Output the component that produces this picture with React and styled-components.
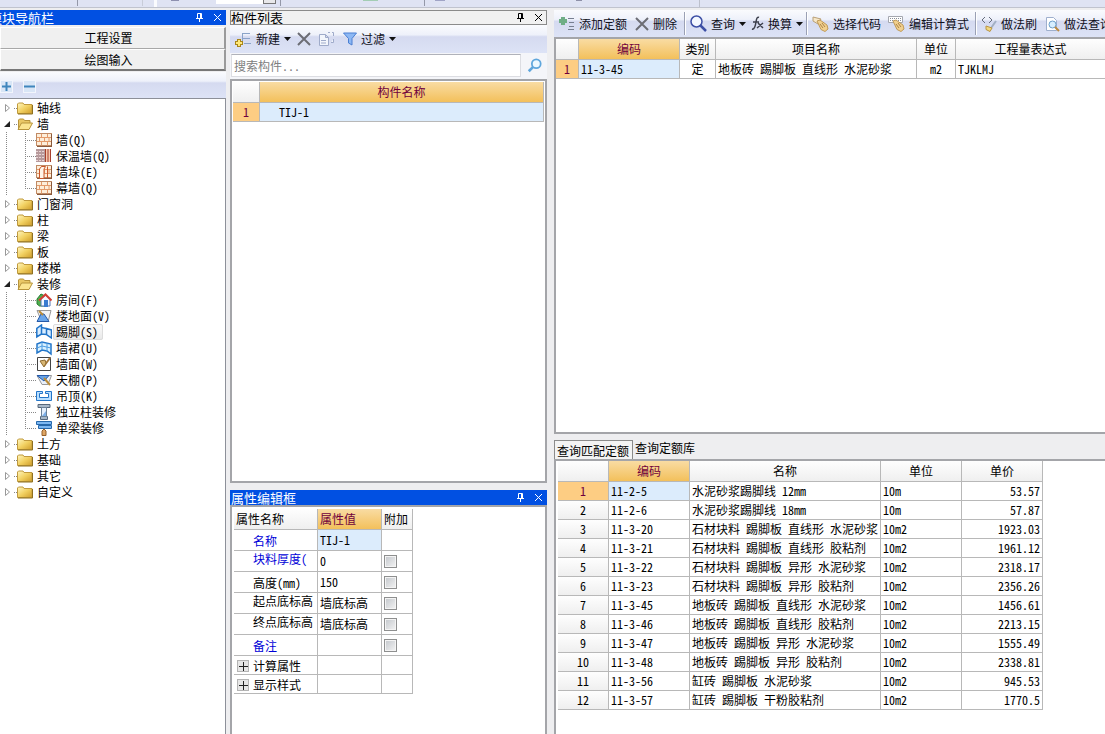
import React from "react";
import styled, { createGlobalStyle, css } from "styled-components";

const sans = '"Noto Sans CJK SC", "Noto Sans", sans-serif';

const Global = createGlobalStyle`
  *, *::before, *::after { box-sizing: border-box; }
  body { margin: 0; font: 12px/16px ${sans}; font-feature-settings: "hwid"; color: #000; background: #eeeef0; overflow: hidden; }
  button, input { font: inherit; font-feature-settings: inherit; color: inherit; }
  button { cursor: pointer; }
  svg { display: block; flex: none; }
`;

const line = "#b8b8b8";
const orange = "linear-gradient(#f9dca3, #f3c05b)";
const grey = "linear-gradient(#fefefe, #efefef)";
const lilac = "linear-gradient(#fafbfe 0%, #eef1fa 35%, #d5daf0 42%, #dde3f6 100%)";

const Window = styled.div`
  display: flex;
  flex-direction: column;
  height: 100vh;
  min-height: 720px;
`;
const TopStrip = styled.div`
  display: flex;
  flex: none;
  height: 8px;
  background: #dfe3f3;
  border-bottom: 1px solid #c0c3ce;
  overflow: hidden;
`;
const StripPart = styled.span`
  flex: none;
  width: ${(p) => p.$w}px;
  height: ${(p) => p.$h || 6}px;
  margin-left: ${(p) => p.$gap}px;
  background: ${(p) => p.$c};
  border: ${(p) => (p.$boxed ? "1px solid #777" : "0")};
  border-top: 0;
`;
const Workspace = styled.main`
  flex: 1;
  min-height: 0;
  display: flex;
  gap: 4px;
  padding-top: 2px;
`;
const Column = styled.section`
  display: flex;
  flex-direction: column;
  min-width: 0;
`;
const Nav = styled(Column)`
  flex: none;
  width: 226px;
`;
const Middle = styled(Column)`
  flex: none;
  width: 317px;
  gap: 7px;
`;
const Right = styled(Column)`
  flex: 1;
  margin-left: 3px;
  gap: 6px;
`;
const Pane = styled.div`
  display: flex;
  flex-direction: column;
  min-height: 0;
  flex: ${(p) => (p.$size ? `0 0 ${p.$size}px` : "1")};
`;

const TitleBar = styled.header`
  display: flex;
  align-items: center;
  flex: none;
  height: 15px;
  font-size: 13px;
  line-height: 15px;
  color: #fff;
  background: #0150e2;
  ${(p) => p.$plain && css`
    color: #000;
    background: #f1f1f1;
    outline: 1px solid #8b8b8b;
    outline-offset: -1px;
  `}
`;
const Title = styled.h2`
  flex: 1;
  margin: 0 0 0 ${(p) => (p.$cut ? "-11px" : "1px")};
  font: inherit;
  white-space: nowrap;
`;
const GlyphButton = styled.button`
  display: flex;
  align-items: center;
  justify-content: center;
  width: 18px;
  height: 15px;
  padding: 0;
  border: 0;
  background: none;
`;
const Panel = styled.div`
  flex: 1;
  min-height: 0;
  background: #fff;
  border: 2px solid #a4a5a9;
  border-bottom-width: ${(p) => (p.$open ? 0 : 2)}px;
  border-right-width: ${(p) => (p.$flush ? 0 : 2)}px;
  padding: ${(p) => p.$pad || "0"};
  overflow: hidden;
`;

const ModuleButton = styled.button`
  flex: none;
  height: 22px;
  padding: 0 8px 0 0;
  background: #f0f0f0;
  border: 1px solid #fff;
  border-right: 2px solid #9a9a9a;
  border-bottom: ${(p) => (p.$strong ? "2px solid #777" : "1px solid #a8a8a8")};
`;
const ModuleList = styled.div`
  display: flex;
  flex-direction: column;
  padding: 2px 0 1px;
`;
const NavTools = styled.div`
  display: flex;
  align-items: center;
  gap: 10px;
  flex: none;
  height: 26px;
  padding-top: 2px;
  background: ${lilac};
`;
const SquareButton = styled.button`
  display: flex;
  align-items: center;
  justify-content: center;
  width: 13px;
  height: 13px;
  padding: 0;
  border: 1px solid #f2f5fc;
  background: #d9e6f6;
`;

const Tree = styled.ul`
  flex: 1;
  margin: 0;
  padding: 1px 0 0;
  list-style: none;
  background: #fff;
  border-top: 1px solid #8d9099;
  border-right: 1px solid #8d9099;
  overflow: hidden;
`;
const Group = styled.ul`
  margin: 0;
  padding: 0 0 0 6px;
  list-style: none;
  background: repeating-linear-gradient(#888 0 1px, transparent 1px 2px) 6px 0 / 1px 100% no-repeat;
`;
const TreeRow = styled.div`
  display: flex;
  align-items: center;
  height: 16px;
  padding-left: 3px;
  white-space: nowrap;
`;
const Stub = styled.span`
  width: 3px;
  height: 1px;
  margin-left: 3px;
  background: repeating-linear-gradient(90deg, #888 0 1px, transparent 1px 2px);
`;
const Branch = styled.span`
  width: 11px;
  height: 16px;
  margin-left: 16px;
  background:
    repeating-linear-gradient(#888 0 1px, transparent 1px 2px) 0 0 / 1px ${(p) => (p.$last ? "50%" : "100%")} no-repeat,
    repeating-linear-gradient(90deg, #888 0 1px, transparent 1px 2px) 0 8px / 100% 1px no-repeat;
`;
const Label = styled.span`
  padding: 0 5px 0 3px;
  margin-left: 1px;
  line-height: 16px;
  ${(p) => p.$selected && css`
    background: linear-gradient(#fbfbfb, #e8e8e8);
    outline: 1px solid #dcdcdc;
    outline-offset: -1px;
    border-radius: 2px;
  `}
`;

const ToolBar = styled.div`
  display: flex;
  align-items: center;
  flex: none;
  height: ${(p) => p.$height}px;
  padding-left: 5px;
  background: ${lilac};
  overflow: hidden;
`;
const Tool = styled.button`
  display: flex;
  align-items: center;
  gap: 4px;
  flex: none;
  padding: 0;
  margin-right: ${(p) => p.$after || 0}px;
  border: 0;
  background: none;
  color: #10101c;
  white-space: nowrap;
`;
const Separator = styled.span`
  flex: none;
  width: 2px;
  height: 23px;
  margin-right: 4px;
  border-left: 1px solid #9aa0b4;
  border-right: 1px solid #fff;
`;
const Search = styled.label`
  display: flex;
  align-items: center;
  flex: none;
  height: 26px;
  padding: 1px 5px 2px 1px;
  background: #f4f5f9;
`;
const SearchBox = styled.input`
  flex: 1;
  min-width: 0;
  height: 23px;
  margin-right: 6px;
  padding: 0 2px;
  border: 1px solid #dcdde2;
  border-top-color: #b0b2ba;
  background: #fff;
  &::placeholder { color: #808080; opacity: 1; }
`;

const Grid = styled.table`
  width: ${(p) => (p.$fill ? "100%" : `${p.$width}px`)};
  table-layout: fixed;
  border-collapse: separate;
  border-spacing: 0;
  ${(p) => p.$openEnd && css`
    tr > :last-child { border-right: 0; }
  `}
`;
const Th = styled.th`
  width: ${(p) => (p.$w ? `${p.$w}px` : "auto")};
  height: ${(p) => p.$h || 21}px;
  padding: 0 2px;
  font-weight: normal;
  text-align: ${(p) => p.$align || "center"};
  line-height: 16px;
  white-space: nowrap;
  color: ${(p) => (p.$active ? "#70003c" : "#000")};
  background: ${(p) => (p.$active ? orange : grey)};
  border-right: 1px solid ${line};
  border-bottom: 1px solid ${line};
`;
const Td = styled.td`
  height: ${(p) => p.$h || 19}px;
  padding: ${(p) => p.$pad || "0 2px"};
  line-height: 16px;
  text-align: ${(p) => p.$align || "left"};
  white-space: nowrap;
  overflow: hidden;
  background: ${(p) => (p.$selected ? "#dcecfc" : "#fff")};
  border-right: 1px solid ${line};
  border-bottom: 1px solid ${line};
`;
const RowHead = styled(Th)`
  height: 19px;
  text-align: center;
  ${(p) => p.$current && css`
    color: #70003c;
    background: #fdcd83;
  `}
`;
const PropName = styled(Td)`
  padding-left: ${(p) => (p.$group ? 3 : 19)}px;
  padding-right: 0;
  padding-top: ${(p) => (p.$raised ? 0 : 2)}px;
  color: ${(p) => (p.$blue ? "#0000d8" : "#000")};
  vertical-align: ${(p) => (p.$raised ? "top" : "middle")};
`;
const GroupName = styled.span`
  display: flex;
  align-items: center;
  gap: 4px;
`;
const ExpandBox = styled.button`
  display: flex;
  align-items: center;
  justify-content: center;
  width: 12px;
  height: 12px;
  padding: 0;
  border: 1px solid #b4b4b4;
  background: #e6e6e6;
`;
const Tick = styled.input.attrs({ type: "checkbox" })`
  appearance: none;
  display: block;
  width: 13px;
  height: 13px;
  margin: 0;
  border: 1px solid #8e8f8f;
  background: linear-gradient(135deg, #c2c6cb, #f4f4f4);
  box-shadow: inset 0 0 0 1px #f4f4f4;
`;

const Tabs = styled.div`
  display: flex;
  flex: none;
  height: 19px;
`;
const Tab = styled.button`
  height: ${(p) => (p.$on ? 19 : 17)}px;
  padding: ${(p) => (p.$on ? "1px 3px 0 2px" : "0 3px 2px 2px")};
  line-height: 16px;
  border: ${(p) => (p.$on ? "1px solid #8b8b8b" : "0")};
  border-bottom: 0;
  background: ${(p) => (p.$on ? "#f3f3f3" : "none")};
`;

const Pin = () => (
  <svg width="9" height="9" viewBox="0 0 9 9" fill="none" stroke="currentColor">
    <path d="M2.500 5V.5h4V5M5.500 1v4M1 5.500h7M4.500 6v3" />
  </svg>
);
const Close = () => (
  <svg width="9" height="9" viewBox="0 0 9 9" fill="none" stroke="currentColor">
    <path d="M1 1l7 7M8 1L1 8" />
  </svg>
);
const Caret = () => (
  <svg width="7" height="4" viewBox="0 0 7 4"><path d="M0 0h7L3.500 4z" fill="#111" /></svg>
);
const Plus = ({ color = "#3f86bd", size = 9, weight = 2 }) => (
  <svg width={size} height={size} viewBox="0 0 9 9"><path d="M4.500 0v9M0 4.500h9" stroke={color} strokeWidth={weight} /></svg>
);
const Minus = () => (
  <svg width="11" height="9" viewBox="0 0 11 9"><path d="M0 4.500h11" stroke="#3f86bd" strokeWidth="2" /></svg>
);
const Expander = ({ open }) => (
  <svg width="8" height="10" viewBox="0 0 8 10">
    {open
      ? <path d="M7 2v6H1z" fill="#222" />
      : <path d="M2.500 1.500v7L6.500 5z" fill="#fff" stroke="#999" />}
  </svg>
);
const Folder = ({ open }) => (
  <svg width="16" height="14" viewBox="0 0 16 14">
    <defs>
      <linearGradient id="folderFill" x1="0" y1="0" x2="1" y2="1">
        <stop offset="0" stopColor="#fff6c0" /><stop offset=".5" stopColor="#f2d162" /><stop offset="1" stopColor="#cf9d2a" />
      </linearGradient>
    </defs>
    {open ? (
      <>
        <path d="M1.500 12V3l1-1h4l1 1.500h5.500V7" fill="#e9c765" stroke="#b8943c" />
        <path d="M1 12.500L4.500 6h11l-3.500 6.500z" fill="#fbe48f" stroke="#b8943c" />
      </>
    ) : (
      <>
        <path d="M.5 12.500V3l1-1h4.500l1 1.500h8v9z" fill="url(#folderFill)" stroke="#c09a3e" />
        <path d="M15.500 4v9H1" fill="none" stroke="#8f701f" />
      </>
    )}
  </svg>
);

const BrickIcon = () => (
  <>
    <rect x=".5" y="1.500" width="15" height="12" fill="#fdeeda" stroke="#c08a64" />
    <path d="M1 5.500h14M1 9.500h14M5.500 2v3.500M11.500 2v3.500M3.500 6v3.500M8.500 6v3.500M13 6v3.500M5.500 10v3.500M11.500 10v3.500" stroke="#e39a6a" />
    <path d="M1 14.500h15M15.500 2v12" stroke="#8a5a3c" />
  </>
);
const treeIcons = {
  brick: <BrickIcon />,
  insulated: (
    <>
      <rect x="0" y="1" width="9" height="13" fill="#b79a9c" />
      <path d="M0 3.500h9M0 6.500h9M0 9.500h9M0 12.500h9" stroke="#ead6d6" strokeDasharray="2 1" />
      <rect x="9" y="1" width="6" height="13" fill="#f7c9b0" />
      <path d="M9.500 1v13M12 1v13M14.500 1v13" stroke="#a8402c" />
    </>
  ),
  pier: (
    <>
      <BrickIcon />
      <path d="M3.500 14.500V5l2-2.500h4L8 5v9.500zM11.500 3v11" fill="#fff6ea" stroke="#c8582c" />
    </>
  ),
  room: (
    <>
      <path d="M1 7l4-5 4 2v10H3.500L1 12z" fill="#4fae4e" stroke="#287a30" />
      <path d="M5 7v7h9V7L9.500 3z" fill="#f4f8ff" stroke="#5578b8" />
      <path d="M3 8.500l6.500-6 6 6" fill="none" stroke="#d33f35" strokeWidth="2" />
      <path d="M8 8h4v7H8z" fill="#397bd0" />
    </>
  ),
  floor: (
    <>
      <path d="M1 2.500h14L12.500 12H5z" fill="#f1f3f6" stroke="#999" />
      <path d="M1 13.500L5 6h3l5 7.500z" fill="#68a5eb" stroke="#265aa8" />
      <path d="M3 3l4 4" stroke="#b98b39" strokeWidth="2" />
    </>
  ),
  skirting: (
    <>
      <path d="M.8 13V4.500L5.500 1v9zM5.500 3.500l5 1v6l-5-.5zM10.500 4.500l5 1.500v8l-5-3.500z" fill="#d8edff" stroke="#2275c9" strokeWidth="1.500" />
    </>
  ),
  dado: (
    <>
      <path d="M1 13V4l5-2 9 2v10l-4-3-5-1z" fill="#d8f1ff" stroke="#2275c9" strokeWidth="1.500" />
      <path d="M1 8l5-2 9 2M6 2v8M11 3v8" fill="none" stroke="#4d9ce2" />
    </>
  ),
  wallface: (
    <>
      <path d="M1.500 1.500h13v13h-13z" fill="#fff" stroke="#444" />
      <path d="M8 10l6-8" stroke="#a87939" strokeWidth="2" />
      <path d="M4 5l5-1 1 3-2 4z" fill="#d8b673" stroke="#8e6c32" />
    </>
  ),
  ceiling: (
    <>
      <path d="M1 3.500h14.500L12 12.500H6z" fill="#e7effb" stroke="#999" />
      <path d="M1 3.500h12l-5 5.500z" fill="#65a2e6" stroke="#265aa8" />
      <path d="M8 6l6 7" stroke="#b98b39" strokeWidth="2" />
    </>
  ),
  suspended: <path d="M6.500 3.500h-6v9h15v-9h-6v2h3v4h-9v-4h3z" fill="#b9dfff" stroke="#2275c9" />,
  column: (
    <>
      <path d="M2 .5h12v3H2zM4.500 12.500h7v3h-7z" fill="#a8b8c8" stroke="#57687c" />
      <path d="M5.500 3.500h5v9h-5z" fill="#e4effc" stroke="#6c8196" />
      <path d="M6 12l4-5v5z" fill="#7eb0e8" />
    </>
  ),
  beam: (
    <>
      <path d="M.5 1.500h15v3H.5zM2.500 5.500h13v3h-13z" fill="#7cb7f2" stroke="#2668ac" />
      <path d="M6 11l2-2 2 2v4.500H6z" fill="#dfa664" stroke="#93602c" />
    </>
  ),
};
const TreeIcon = ({ name }) => <svg width="16" height="16" viewBox="0 0 16 16">{treeIcons[name]}</svg>;

const NewIcon = () => (
  <svg width="17" height="17" viewBox="0 0 17 17">
    <path d="M7 2.500h8M7 7.500h8M9 12.500h7M7.500 2v9" stroke="#8aa3c8" fill="none" />
    <path d="M4 8v8M0 12h8" stroke="#a8861e" strokeWidth="4" /><path d="M4 9v6M1 12h6" stroke="#ffe878" strokeWidth="2" />
  </svg>
);
const AddIcon = () => (
  <svg width="16" height="16" viewBox="0 0 16 16">
    <path d="M4 1v8M0 5h8" stroke="#6fae86" strokeWidth="4" />
    <path d="M9 2.500h6M10 6.500h5M10 10.500h5M9 13.500h6" stroke="#777f90" fill="none" />
  </svg>
);
const DeleteIcon = () => (
  <svg width="14" height="14" viewBox="0 0 14 14"><path d="M1 1l12 12M13 1L1 13" stroke="#6c6d75" strokeWidth="2" /></svg>
);
const CopyIcon = () => (
  <svg width="17" height="16" viewBox="0 0 17 16" fill="#f3f6fc" stroke="#9fabca">
    <path d="M1.500 3.500h6l3 3v8h-9zM7.500 3.500v3h3M3 9.500h5M3 12h5" /><path d="M10 1.500h2M14 1.500h1.500V5M15.500 8v3.500H13" />
  </svg>
);
const FilterIcon = () => (
  <svg width="14" height="14" viewBox="0 0 14 14"><path d="M.5 1h13L9 6.500V13l-3.500-2V6.500z" fill="#8db8f4" stroke="#4a7fd2" /></svg>
);
const Magnifier = ({ color = "#3d4fa5", flip, size = 17 }) => (
  <svg width={size} height={size} viewBox="0 0 17 17" fill="none" stroke={color}>
    {flip
      ? <><circle cx="10.500" cy="6.500" r="5" strokeWidth="2" fill="#edf8ff" /><path d="M7 10l-5 5" strokeWidth="3" /></>
      : <><circle cx="6.500" cy="6.500" r="5.500" strokeWidth="1.500" fill="#f4f8ff" /><path d="M10 10l6 6" strokeWidth="2.500" /></>}
  </svg>
);
const FxIcon = () => (
  <svg width="13" height="15" viewBox="0 0 13 15" fill="none" stroke="#3c3f4c" strokeWidth="1.500">
    <path d="M8 1.500C6 .5 5.500 3 5 6S3.500 14 1 13M2 6h6M7 7l5 5M12 7l-6 5" />
  </svg>
);
const Hand = ({ children }) => (
  <svg width="17" height="17" viewBox="0 0 17 17">
    {children}
    <path d="M5 6l3-1 7 5 1 4-3 2.500-4-2z" fill="#f1d08e" stroke="#c09a58" />
    <path d="M8 9l3 4M10 8l3 4" stroke="#ac8348" />
  </svg>
);
const CodeIcon = () => <Hand><path d="M1 2l8 2-3 5-5-3z" fill="#f6e7c8" stroke="#b9a078" /></Hand>;
const FormulaIcon = () => (
  <Hand>
    <path d="M.5 1.500h14v6H.5z" fill="#fff" stroke="#a4a7af" />
    <path d="M2 3.500h11M2 5.500h11" stroke="#888d99" strokeDasharray="1 1" />
  </Hand>
);
const BrushIcon = () => (
  <svg width="16" height="16" viewBox="0 0 16 16" fill="none">
    <path d="M4 1L1 4l3 3M8 1l3 3-3 3" stroke="#666c7c" />
    <path d="M15 5l-5 7" stroke="#a2afc3" strokeWidth="2" /><path d="M5 10l6 2-2 3.500-4-2z" fill="#f2d87e" stroke="#b99342" />
  </svg>
);
const PageSearchIcon = () => (
  <svg width="15" height="16" viewBox="0 0 15 16">
    <path d="M1.500 1.500h7l3 3v10h-10z" fill="#fff" stroke="#9eafcd" />
    <circle cx="7.500" cy="8.500" r="3.500" fill="#d7efff" stroke="#6d9fcb" /><path d="M10 11l4 4" stroke="#bc8a42" strokeWidth="2" />
  </svg>
);

const stripParts = [
  { gap: 77, w: 1, c: "#9498a8" },
  { gap: 64, w: 1, c: "#c8ccd8" },
  { gap: 11, w: 3, c: "#fafbfe", h: 7 },
  { gap: 14, w: 8, c: "#8e90b0", h: 1 },
  { gap: 37, w: 47, c: "#fff", h: 4 },
  { gap: 0, w: 13, c: "#e8e8ea", h: 4, boxed: true },
  { gap: 4, w: 1, c: "#9498a8" },
  { gap: 82, w: 15, c: "#a3cdb4", h: 1 },
  { gap: 46, w: 1, c: "#9498a8" },
  { gap: 10, w: 10, c: "#a0a4c6", h: 1 },
  { gap: 131, w: 6, c: "#8e90a8", h: 1 },
  { gap: 117, w: 1, c: "#bcc0cc", h: 7 },
];

const tree = [
  { t: "轴线" },
  { t: "墙", kids: [["brick", "墙(Q)"], ["insulated", "保温墙(Q)"], ["pier", "墙垛(E)"], ["brick", "幕墙(Q)"]] },
  { t: "门窗洞" }, { t: "柱" }, { t: "梁" }, { t: "板" }, { t: "楼梯" },
  { t: "装修", kids: [["room", "房间(F)"], ["floor", "楼地面(V)"], ["skirting", "踢脚(S)"], ["dado", "墙裙(U)"], ["wallface", "墙面(W)"], ["ceiling", "天棚(P)"], ["suspended", "吊顶(K)"], ["column", "独立柱装修"], ["beam", "单梁装修"]] },
  { t: "土方" }, { t: "基础" }, { t: "其它" }, { t: "自定义" },
];

const quotas = [
  ["11-2-5", "水泥砂浆踢脚线 12mm", "10m", "53.57"],
  ["11-2-6", "水泥砂浆踢脚线 18mm", "10m", "57.87"],
  ["11-3-20", "石材块料 踢脚板 直线形 水泥砂浆", "10m2", "1923.03"],
  ["11-3-21", "石材块料 踢脚板 直线形 胶粘剂", "10m2", "1961.12"],
  ["11-3-22", "石材块料 踢脚板 异形 水泥砂浆", "10m2", "2318.17"],
  ["11-3-23", "石材块料 踢脚板 异形 胶粘剂", "10m2", "2356.26"],
  ["11-3-45", "地板砖 踢脚板 直线形 水泥砂浆", "10m2", "1456.61"],
  ["11-3-46", "地板砖 踢脚板 直线形 胶粘剂", "10m2", "2213.15"],
  ["11-3-47", "地板砖 踢脚板 异形 水泥砂浆", "10m2", "1555.49"],
  ["11-3-48", "地板砖 踢脚板 异形 胶粘剂", "10m2", "2338.81"],
  ["11-3-56", "缸砖 踢脚板 水泥砂浆", "10m2", "945.53"],
  ["11-3-57", "缸砖 踢脚板 干粉胶粘剂", "10m2", "1770.5"],
];

const props = [
  { n: "名称", v: "TIJ-1", blue: true, selected: true },
  { n: "块料厚度(", v: "0", blue: true, raised: true, tick: true },
  { n: "高度(mm)", v: "150", tick: true },
  { n: "起点底标高", v: "墙底标高", raised: true, tick: true },
  { n: "终点底标高", v: "墙底标高", raised: true, tick: true },
  { n: "备注", v: "", blue: true, tick: true },
  { n: "计算属性", group: true },
  { n: "显示样式", group: true },
];

const PanelTitle = ({ children, plain, cut }) => (
  <TitleBar $plain={plain}>
    <Title $cut={cut}>{children}</Title>
    <GlyphButton aria-label="固定"><Pin /></GlyphButton>
    <GlyphButton aria-label="关闭"><Close /></GlyphButton>
  </TitleBar>
);

function NavTree() {
  return (
    <Tree>
      {tree.map(({ t, kids }) => (
        <li key={t}>
          <TreeRow><Expander open={!!kids} /><Stub /><Folder open={!!kids} /><Label>{t}</Label></TreeRow>
          {kids && (
            <Group>
              {kids.map(([icon, name], i) => (
                <li key={name}>
                  <TreeRow>
                    <Branch $last={i === kids.length - 1} />
                    <TreeIcon name={icon} />
                    <Label $selected={icon === "skirting"}>{name}</Label>
                  </TreeRow>
                </li>
              ))}
            </Group>
          )}
        </li>
      ))}
    </Tree>
  );
}

export default function App() {
  return (
    <Window>
      <Global />
      <TopStrip>
        {stripParts.map((s, i) => <StripPart key={i} $gap={s.gap} $w={s.w} $h={s.h} $c={s.c} $boxed={s.boxed} />)}
      </TopStrip>
      <Workspace>
        <Nav>
          <PanelTitle cut>模块导航栏</PanelTitle>
          <ModuleList>
            <ModuleButton>工程设置</ModuleButton>
            <ModuleButton $strong>绘图输入</ModuleButton>
          </ModuleList>
          <NavTools>
            <SquareButton aria-label="展开"><Plus /></SquareButton>
            <SquareButton aria-label="折叠"><Minus /></SquareButton>
          </NavTools>
          <NavTree />
        </Nav>

        <Middle>
          <Pane>
            <PanelTitle plain>构件列表</PanelTitle>
            <ToolBar $height={28}>
              <Tool $after={6}><NewIcon />新建<Caret /></Tool>
              <Tool aria-label="删除" $after={7}><DeleteIcon /></Tool>
              <Tool aria-label="复制" $after={8}><CopyIcon /></Tool>
              <Tool><FilterIcon />过滤<Caret /></Tool>
            </ToolBar>
            <Search>
              <SearchBox aria-label="搜索构件" placeholder="搜索构件..." />
              <Magnifier flip color="#5fa6dc" size={15} />
            </Search>
            <Panel $pad="1px 1px 0 1px">
              <Grid $fill>
                <thead><tr><Th $w={27} /><Th $active>构件名称</Th></tr></thead>
                <tbody><tr><RowHead $current scope="row">1</RowHead><Td $selected $pad="0 19px">TIJ-1</Td></tr></tbody>
              </Grid>
            </Panel>
          </Pane>
          <Pane $size={244}>
            <PanelTitle>属性编辑框</PanelTitle>
            <Panel $open $pad="2px 0 0 2px">
              <Grid $width={179}>
                <thead>
                  <tr><Th $w={84} $align="left">属性名称</Th><Th $w={64} $align="left" $active>属性值</Th><Th $w={31} $align="left">附加</Th></tr>
                </thead>
                <tbody>
                  {props.map((p) => (
                    <tr key={p.n}>
                      <PropName $h={p.group ? 19 : 21} $group={p.group} $raised={p.raised} $blue={p.blue}>
                        {p.group
                          ? <GroupName><ExpandBox aria-label={p.n}><Plus color="#222" weight={1} /></ExpandBox>{p.n}</GroupName>
                          : p.n}
                      </PropName>
                      <Td $h={p.group ? 19 : 21} $selected={p.selected}>{p.v}</Td>
                      <Td $h={p.group ? 19 : 21}>{p.tick && <Tick aria-label={`附加 ${p.n}`} />}</Td>
                    </tr>
                  ))}
                </tbody>
              </Grid>
            </Panel>
          </Pane>
        </Middle>

        <Right>
          <Pane>
            <ToolBar $height={27}>
              <Tool $after={8}><AddIcon />添加定额</Tool>
              <Tool $after={7}><DeleteIcon />删除</Tool>
              <Separator />
              <Tool $after={5}><Magnifier />查询<Caret /></Tool>
              <Tool $after={3}><FxIcon />换算<Caret /></Tool>
              <Separator />
              <Tool $after={7}><CodeIcon />选择代码</Tool>
              <Tool $after={6}><FormulaIcon />编辑计算式</Tool>
              <Separator />
              <Tool $after={8}><BrushIcon />做法刷</Tool>
              <Tool><PageSearchIcon />做法查询</Tool>
            </ToolBar>
            <Panel $flush>
              <Grid $fill $openEnd>
                <thead>
                  <tr><Th $w={23} /><Th $w={101} $active>编码</Th><Th $w={36}>类别</Th><Th $w={201}>项目名称</Th><Th $w={39}>单位</Th><Th>工程量表达式</Th></tr>
                </thead>
                <tbody>
                  <tr>
                    <RowHead $current scope="row">1</RowHead>
                    <Td $selected>11-3-45</Td><Td $align="center">定</Td><Td>地板砖 踢脚板 直线形 水泥砂浆</Td><Td $align="center">m2</Td><Td>TJKLMJ</Td>
                  </tr>
                </tbody>
              </Grid>
            </Panel>
          </Pane>
          <Pane $size={294}>
            <Tabs role="tablist">
              <Tab role="tab" aria-selected="true" $on>查询匹配定额</Tab>
              <Tab role="tab" aria-selected="false">查询定额库</Tab>
            </Tabs>
            <Panel $flush $open $pad="0 0 0 2px">
              <Grid $width={485}>
                <thead>
                  <tr><Th $w={51} /><Th $w={81} $active>编码</Th><Th $w={191}>名称</Th><Th $w={81}>单位</Th><Th $w={81}>单价</Th></tr>
                </thead>
                <tbody>
                  {quotas.map(([code, name, unit, price], i) => (
                    <tr key={code}>
                      <RowHead $current={i === 0} scope="row">{i + 1}</RowHead>
                      <Td $selected={i === 0}>{code}</Td><Td>{name}</Td><Td>{unit}</Td><Td $align="right">{price}</Td>
                    </tr>
                  ))}
                </tbody>
              </Grid>
            </Panel>
          </Pane>
        </Right>
      </Workspace>
    </Window>
  );
}
